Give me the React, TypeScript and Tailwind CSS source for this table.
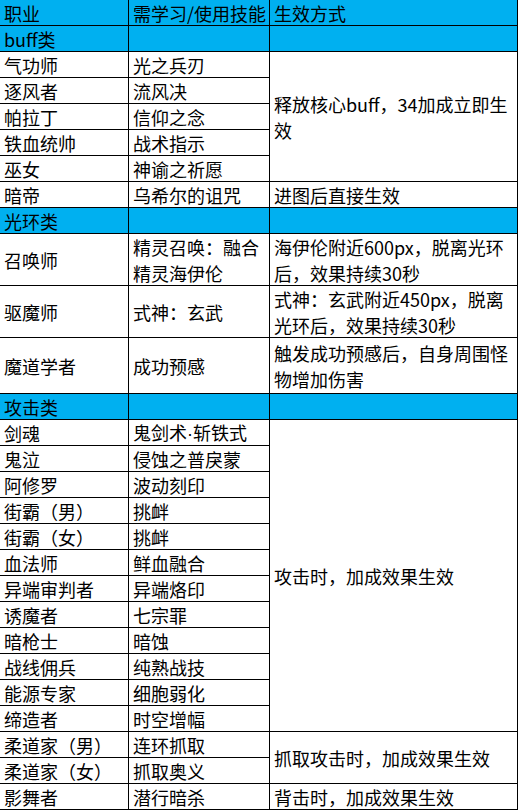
import { Fragment, type ReactNode } from "react";

type CellProps = {
  children?: ReactNode;
  blue?: boolean;
  span?: string;
};

function Cell({ children, blue, span = "" }: CellProps) {
  return (
    <div
      className={`${span} flex items-center overflow-hidden whitespace-nowrap border-r border-b border-black pl-1 leading-[26px] ${
        blue ? "bg-[#00b0f0]" : "bg-white"
      }`}
    >
      <div>{children}</div>
    </div>
  );
}

const dot = <span className="font-['Liberation_Sans',sans-serif]">·</span>;

const buffJobs: [string, ReactNode][] = [
  ["气功师", "光之兵刃"],
  ["逐风者", "流风决"],
  ["帕拉丁", "信仰之念"],
  ["铁血统帅", "战术指示"],
  ["巫女", "神谕之祈愿"],
];

const attackJobs: [string, ReactNode][] = [
  ["剑魂", <>鬼剑术{dot}斩铁式</>],
  ["鬼泣", "侵蚀之普戾蒙"],
  ["阿修罗", "波动刻印"],
  ["街霸（男）", "挑衅"],
  ["街霸（女）", "挑衅"],
  ["血法师", "鲜血融合"],
  ["异端审判者", "异端烙印"],
  ["诱魔者", "七宗罪"],
  ["暗枪士", "暗蚀"],
  ["战线佣兵", "纯熟战技"],
  ["能源专家", "细胞弱化"],
  ["缔造者", "时空增幅"],
];

export default function App() {
  return (
    <div className="min-h-[811px] w-[519px] bg-white font-['Noto_Sans_CJK_SC',sans-serif] text-[18px] text-black">
      <div className="grid w-[518px] grid-cols-[129px_141px_248px] grid-rows-[repeat(9,26px)_52px_52px_56px_repeat(16,26px)]">
        <Cell blue>职业</Cell>
        <Cell blue>需学习/使用技能</Cell>
        <Cell blue>生效方式</Cell>

        <Cell blue>buff类</Cell>
        <Cell blue />
        <Cell blue />

        {buffJobs.map(([job, skill], i) => (
          <Fragment key={job}>
            <Cell>{job}</Cell>
            <Cell>{skill}</Cell>
            {i === 0 && (
              <Cell span="row-span-5">
                释放核心buff，34加成立即生
                <br />效
              </Cell>
            )}
          </Fragment>
        ))}

        <Cell>暗帝</Cell>
        <Cell>乌希尔的诅咒</Cell>
        <Cell>进图后直接生效</Cell>

        <Cell blue>光环类</Cell>
        <Cell blue />
        <Cell blue />

        <Cell>召唤师</Cell>
        <Cell>
          精灵召唤：融合
          <br />
          精灵海伊伦
        </Cell>
        <Cell>
          海伊伦附近600px，脱离光环
          <br />
          后，效果持续30秒
        </Cell>

        <Cell>驱魔师</Cell>
        <Cell>式神：玄武</Cell>
        <Cell>
          式神：玄武附近450px，脱离
          <br />
          光环后，效果持续30秒
        </Cell>

        <Cell>魔道学者</Cell>
        <Cell>成功预感</Cell>
        <Cell>
          触发成功预感后，自身周围怪
          <br />
          物增加伤害
        </Cell>

        <Cell blue>攻击类</Cell>
        <Cell blue />
        <Cell blue />

        {attackJobs.map(([job, skill], i) => (
          <Fragment key={job}>
            <Cell>{job}</Cell>
            <Cell>{skill}</Cell>
            {i === 0 && <Cell span="row-span-12">攻击时，加成效果生效</Cell>}
          </Fragment>
        ))}

        <Cell>柔道家（男）</Cell>
        <Cell>连环抓取</Cell>
        <Cell span="row-span-2">抓取攻击时，加成效果生效</Cell>
        <Cell>柔道家（女）</Cell>
        <Cell>抓取奥义</Cell>

        <Cell>影舞者</Cell>
        <Cell>潜行暗杀</Cell>
        <Cell>背击时，加成效果生效</Cell>
      </div>
    </div>
  );
}
